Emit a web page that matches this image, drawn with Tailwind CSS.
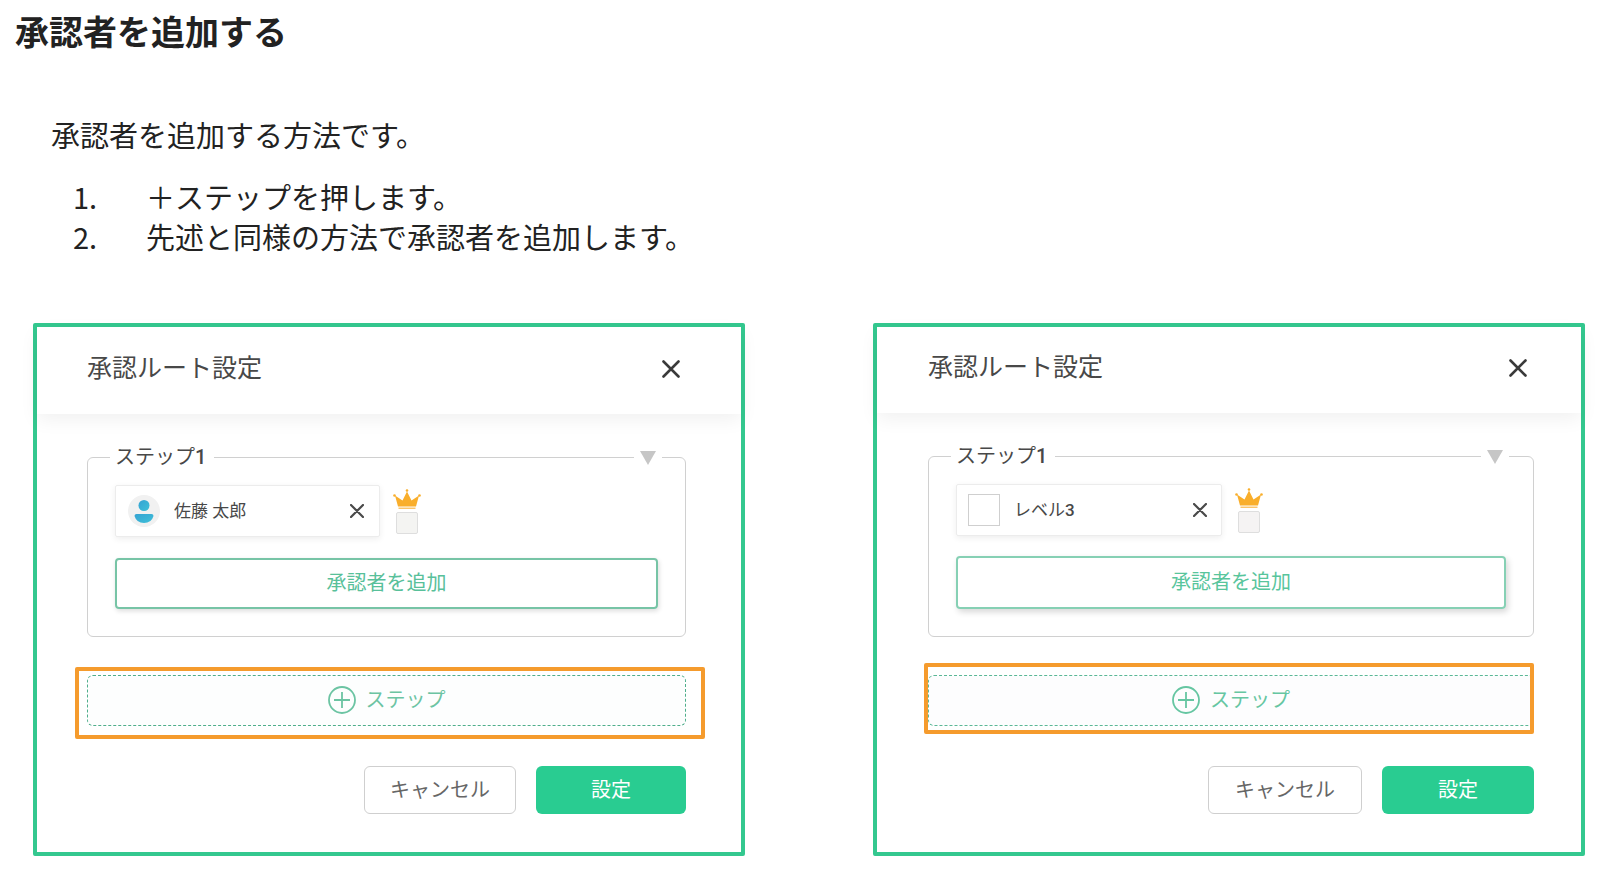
<!DOCTYPE html>
<html lang="ja">
<head>
    <meta charset="UTF-8">
    <meta name="viewport" content="width=device-width, initial-scale=1.0">
    <title>承認者を追加する</title>
    <script src="https://cdn.jsdelivr.net/npm/@tailwindcss/browser@4"></script>
</head>
<body class="bg-white text-[#222] font-['Noto_Sans_CJK_JP',sans-serif]">
    <h1 class="pt-[7px] pl-[15px] text-[34px] leading-[48px] font-bold">承認者を追加する</h1>

    <div class="mt-[59px] pl-[51px] text-[29px] leading-10">
        <p>承認者を追加する方法です。</p>
        <ol class="mt-[22px] pl-[22px]">
            <li class="flex"><span class="w-[73px]">1.</span>＋ステップを押します。</li>
            <li class="flex"><span class="w-[73px]">2.</span>先述と同様の方法で承認者を追加します。</li>
        </ol>
    </div>

    <main class="mt-[67px] pl-[33px] pr-[15px] grid grid-cols-2 gap-32 items-start font-[Roboto,'Noto_Sans_CJK_JP',sans-serif] text-[#484848]">

        <!-- ユーザーを指定したルート -->
        <section class="border-4 border-[#34c88f] rounded-xs bg-white">
            <header class="h-[87px] pb-1 pl-[50px] pr-[61px] flex items-center justify-between shadow-[0_6px_18px_rgba(0,0,0,0.06)]">
                <h2 class="text-[25px] leading-8">承認ルート設定</h2>
                <button type="button" aria-label="閉じる">
                    <svg class="size-[18px]" viewBox="0 0 18 18" fill="none" stroke="#3a3a3a" stroke-width="2.6" stroke-linecap="round"><path d="M1.5 1.5l15 15M16.5 1.5l-15 15"/></svg>
                </button>
            </header>
            <div class="pt-7 pb-[38px] pl-[50px] pr-[55px]">
                <fieldset class="relative border border-[#d0d0d0] rounded-md px-[27px] pt-[13px] pb-[27px]">
                    <legend class="-ml-[5px] pl-[5px] pr-2 text-[20px] leading-[30px]">ステップ<span class="font-medium">1</span></legend>
                    <button type="button" aria-label="折りたたむ" class="absolute right-[23px] -top-[21px] px-1.5 bg-white">
                        <svg class="w-4 h-[14px]" viewBox="0 0 16 14"><path d="M0 0h16L8 14z" fill="#c6c6c6"/></svg>
                    </button>
                    <div class="flex items-center gap-[13px]">
                        <div class="w-[265px] h-[52px] pl-3 pr-[15px] flex items-center border border-[#ececec] rounded-xs shadow-[0_2px_6px_rgba(0,0,0,0.07)]">
                            <svg class="size-8" viewBox="0 0 32 32">
                                <defs><linearGradient id="face" x1="0" y1="0" x2="1" y2="1"><stop offset="0" stop-color="#35a3d3"/><stop offset="1" stop-color="#3fc0d8"/></linearGradient></defs>
                                <circle cx="16" cy="16" r="16" fill="#f1f1f1"/>
                                <circle cx="16" cy="10.500" r="5.500" fill="url(#face)"/>
                                <path d="M6.500 21Q6.500 19 8.500 19h15Q25.500 19 25.500 21Q23.500 28 16 28T6.500 21z" fill="url(#face)"/>
                            </svg>
                            <span class="ml-3.5 flex-1 text-[17px] leading-6">佐藤 太郎</span>
                            <button type="button" aria-label="佐藤 太郎を削除">
                                <svg class="size-3.5" viewBox="0 0 14 14" fill="none" stroke="#4a4a4a" stroke-width="2.2" stroke-linecap="round"><path d="M1 1l12 12M13 1L1 13"/></svg>
                            </button>
                        </div>
                        <label class="flex flex-col items-center gap-[3px]">
                            <svg class="w-7 h-5" viewBox="0 0 28 20" fill="#f9ae2b"><path d="M5 17.500L2 6.500L9.500 11.500L14 2.500L18.500 11.500L26 6.500L23 17.500z"/><path d="M5.500 18.500h17V20h-17z" fill="#fbc46a"/><circle cx="1.500" cy="6.500" r="1.300"/><circle cx="14" cy="1.500" r="1.300"/><circle cx="26.500" cy="6.500" r="1.300"/></svg>
                            <input type="checkbox" aria-label="佐藤 太郎を必須承認者にする" class="appearance-none size-[22px] border border-[#dedede] rounded-xs bg-[#f4f4f2]">
                        </label>
                    </div>
                    <button type="button" class="mt-[21px] w-full h-[51px] pb-0.5 border-2 border-[#77c4a6] rounded-sm text-[20px] text-[#58c09a] shadow-[1px_2px_5px_rgba(0,0,0,0.14)]">承認者を追加</button>
                </fieldset>
                <div class="relative mt-[38px]">
                    <button type="button" class="w-full h-[51px] pb-0.5 flex items-center justify-center gap-2.5 border border-dashed border-[#4fae8b] rounded-md bg-[#fdfefe] text-[20px] text-[#6cc4a3]">
                        <svg class="size-7" viewBox="0 0 28 28" fill="none" stroke="currentColor" stroke-width="1.800"><circle cx="14" cy="14" r="13"/><path d="M14 6v16M6 14h16"/></svg>
                        ステップ
                    </button>
                    <div class="absolute -top-2 -bottom-[13px] -left-3 -right-[19px] border-4 border-[#f59b2d] rounded-xs pointer-events-none"></div>
                </div>
                <div class="mt-10 flex justify-end gap-5">
                    <button type="button" class="w-[152px] h-12 border border-[#cfcfcf] rounded-md text-[20px] text-[#666]">キャンセル</button>
                    <button type="button" class="w-[150px] h-12 rounded-md bg-[#29cc91] text-[20px] text-white">設定</button>
                </div>
            </div>
        </section>

        <!-- レベルを指定したルート -->
        <section class="border-4 border-[#34c88f] rounded-xs bg-white">
            <header class="h-[86px] pb-1 pl-[51px] pr-[54px] flex items-center justify-between shadow-[0_6px_18px_rgba(0,0,0,0.06)]">
                <h2 class="text-[25px] leading-8">承認ルート設定</h2>
                <button type="button" aria-label="閉じる">
                    <svg class="size-[18px]" viewBox="0 0 18 18" fill="none" stroke="#3a3a3a" stroke-width="2.6" stroke-linecap="round"><path d="M1.5 1.5l15 15M16.5 1.5l-15 15"/></svg>
                </button>
            </header>
            <div class="pt-7 pb-[38px] pl-[51px] pr-[47px]">
                <fieldset class="relative border border-[#d0d0d0] rounded-md px-[27px] pt-[13px] pb-[27px]">
                    <legend class="-ml-[5px] pl-[5px] pr-2 text-[20px] leading-[30px]">ステップ<span class="font-medium">1</span></legend>
                    <button type="button" aria-label="折りたたむ" class="absolute right-[24px] -top-[21px] px-1.5 bg-white">
                        <svg class="w-4 h-[14px]" viewBox="0 0 16 14"><path d="M0 0h16L8 14z" fill="#c6c6c6"/></svg>
                    </button>
                    <div class="flex items-center gap-[13px]">
                        <div class="w-[266px] h-[52px] pl-[11px] pr-[14px] flex items-center border border-[#ececec] rounded-xs shadow-[0_2px_6px_rgba(0,0,0,0.07)]">
                            <span class="size-8 border border-[#cfcfcf] bg-white"></span>
                            <span class="ml-3.5 flex-1 text-[17px] leading-6">レベル<span class="font-medium">3</span></span>
                            <button type="button" aria-label="レベル3を削除">
                                <svg class="size-3.5" viewBox="0 0 14 14" fill="none" stroke="#4a4a4a" stroke-width="2.2" stroke-linecap="round"><path d="M1 1l12 12M13 1L1 13"/></svg>
                            </button>
                        </div>
                        <label class="flex flex-col items-center gap-[3px]">
                            <svg class="w-7 h-5" viewBox="0 0 28 20" fill="#f9ae2b"><path d="M5 17.500L2 6.500L9.500 11.500L14 2.500L18.500 11.500L26 6.500L23 17.500z"/><path d="M5.500 18.500h17V20h-17z" fill="#fbc46a"/><circle cx="1.500" cy="6.500" r="1.300"/><circle cx="14" cy="1.500" r="1.300"/><circle cx="26.500" cy="6.500" r="1.300"/></svg>
                            <input type="checkbox" aria-label="レベル3を必須承認者にする" class="appearance-none size-[22px] border border-[#dedede] rounded-xs bg-[#f5f3f3]">
                        </label>
                    </div>
                    <button type="button" class="mt-5 w-full h-[53px] pb-0.5 border-2 border-[#86d0b4] rounded-sm text-[20px] text-[#58c59c] shadow-[2px_3px_6px_rgba(0,0,0,0.16)]">承認者を追加</button>
                </fieldset>
                <div class="relative mt-[38px]">
                    <button type="button" class="w-full h-[51px] pb-0.5 flex items-center justify-center gap-2.5 border border-dashed border-[#5bb896] rounded-md bg-[#fdfdfe] text-[20px] text-[#66c6a2]">
                        <svg class="size-7" viewBox="0 0 28 28" fill="none" stroke="currentColor" stroke-width="1.800"><circle cx="14" cy="14" r="13"/><path d="M14 6v16M6 14h16"/></svg>
                        ステップ
                    </button>
                    <div class="absolute -top-3 -bottom-2 -left-1 right-0 border-4 border-[#f59b2d] rounded-xs pointer-events-none"></div>
                </div>
                <div class="mt-10 flex justify-end gap-5">
                    <button type="button" class="w-[154px] h-12 border border-[#cfcfcf] rounded-md text-[20px] text-[#666]">キャンセル</button>
                    <button type="button" class="w-[152px] h-12 rounded-md bg-[#29cc91] text-[20px] text-white">設定</button>
                </div>
            </div>
        </section>
    </main>
</body>
</html>
